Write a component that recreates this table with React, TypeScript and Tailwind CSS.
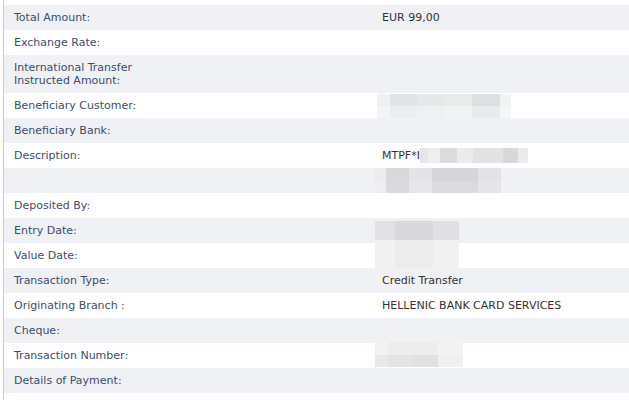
import React from "react";

type Cell = { w: string; c: string };

function Mosaic({ rows, className }: { rows: { h: string; cells: Cell[] }[]; className?: string }) {
  return (
    <span className={"flex flex-col " + (className ?? "")}>
      {rows.map((r, i) => (
        <span key={i} className={"flex " + r.h}>
          {r.cells.map((c, j) => (
            <span key={j} className={c.w + " " + c.c + " h-full"} />
          ))}
        </span>
      ))}
    </span>
  );
}

type Row = { label: React.ReactNode; value?: React.ReactNode };

const rows: Row[] = [
  { label: "Total Amount:", value: "EUR 99,00" },
  { label: "Exchange Rate:" },
  {
    label: (
      <>
        International Transfer
        <br />
        Instructed Amount:
      </>
    ),
  },
  {
    label: "Beneficiary Customer:",
    value: (
      <Mosaic
        className="absolute left-[5px] top-[1px]"
        rows={[
          {
            h: "h-[12px]",
            cells: [
              { w: "w-[13px]", c: "bg-[#eff0f1]" },
              { w: "w-[27px]", c: "bg-[#e1e3e4]" },
              { w: "w-[28px]", c: "bg-[#e5e7e8]" },
              { w: "w-[27px]", c: "bg-[#e9ebeb]" },
              { w: "w-[28px]", c: "bg-[#dde0e1]" },
              { w: "w-[11px]", c: "bg-[#f2f3f4]" },
            ],
          },
          {
            h: "h-[12px]",
            cells: [
              { w: "w-[13px]", c: "bg-[#f3f4f5]" },
              { w: "w-[27px]", c: "bg-[#ecedee]" },
              { w: "w-[28px]", c: "bg-[#eff0f1]" },
              { w: "w-[27px]", c: "bg-[#f1f2f2]" },
              { w: "w-[28px]", c: "bg-[#e8eaeb]" },
              { w: "w-[11px]", c: "bg-[#f5f6f6]" },
            ],
          },
        ]}
      />
    ),
  },
  { label: "Beneficiary Bank:" },
  {
    label: "Description:",
    value: (
      <span className="flex h-[13px] items-center">
        <span>MTPF*I</span>
        <Mosaic
          className="my-[-1px]"
          rows={[
            {
              h: "h-[15px]",
              cells: [
                { w: "w-[8px]", c: "bg-[#e6e6e8]" },
                { w: "w-[12px]", c: "bg-[#eeeef0]" },
                { w: "w-[17px]", c: "bg-[#dcdcdf]" },
                { w: "w-[16px]", c: "bg-[#ebebed]" },
                { w: "w-[30px]", c: "bg-[#e2e2e5]" },
                { w: "w-[15px]", c: "bg-[#d8d8db]" },
                { w: "w-[10px]", c: "bg-[#ebebed]" },
              ],
            },
          ]}
        />
      </span>
    ),
  },
  {
    label: "\u00a0",
    value: (
      <Mosaic
        className="absolute left-[3px] top-0"
        rows={[
          {
            h: "h-[13px]",
            cells: [
              { w: "w-[11px]", c: "bg-[#ececf0]" },
              { w: "w-[23px]", c: "bg-[#d8d8dd]" },
              { w: "w-[23px]", c: "bg-[#e4e4e8]" },
              { w: "w-[46px]", c: "bg-[#d5d5da]" },
              { w: "w-[23px]", c: "bg-[#e3e3e7]" },
            ],
          },
          {
            h: "h-[12px]",
            cells: [
              { w: "w-[11px]", c: "bg-[#eeeef1]" },
              { w: "w-[23px]", c: "bg-[#dadade]" },
              { w: "w-[23px]", c: "bg-[#e7e7eb]" },
              { w: "w-[46px]", c: "bg-[#dbdbdf]" },
              { w: "w-[23px]", c: "bg-[#e6e6ea]" },
            ],
          },
        ]}
      />
    ),
  },
  { label: "Deposited By:" },
  {
    label: "Entry Date:",
    value: (
      <Mosaic
        className="absolute left-[3px] top-[3px] z-10"
        rows={[
          {
            h: "h-[19px]",
            cells: [
              { w: "w-[20px]", c: "bg-[#e1e1e5]" },
              { w: "w-[38px]", c: "bg-[#d8d8dd]" },
              { w: "w-[26px]", c: "bg-[#e0e0e4]" },
            ],
          },
          {
            h: "h-[28px]",
            cells: [
              { w: "w-[20px]", c: "bg-[#f1f1f1]" },
              { w: "w-[38px]", c: "bg-[#ececec]" },
              { w: "w-[26px]", c: "bg-[#f1f1f1]" },
            ],
          },
        ]}
      />
    ),
  },
  { label: "Value Date:" },
  { label: "Transaction Type:", value: "Credit Transfer" },
  { label: "Originating Branch :", value: "HELLENIC BANK CARD SERVICES" },
  { label: "Cheque:" },
  {
    label: "Transaction Number:",
    value: (
      <Mosaic
        className="absolute left-[3px] top-[-1px]"
        rows={[
          {
            h: "h-[13px]",
            cells: [
              { w: "w-[13px]", c: "bg-[#f2f2f2]" },
              { w: "w-[50px]", c: "bg-[#ededed]" },
              { w: "w-[25px]", c: "bg-[#f3f3f3]" },
            ],
          },
          {
            h: "h-[12px]",
            cells: [
              { w: "w-[13px]", c: "bg-[#e9e9e9]" },
              { w: "w-[25px]", c: "bg-[#e4e4e4]" },
              { w: "w-[25px]", c: "bg-[#e1e1e1]" },
              { w: "w-[25px]", c: "bg-[#f0f0f0]" },
            ],
          },
        ]}
      />
    ),
  },
  { label: "Details of Payment:" },
  { label: "\u00a0" },
];

export default function App() {
  return (
    <div className="w-[629px] h-[400px] overflow-hidden bg-white pl-[3px] font-['DejaVu_Sans',sans-serif] text-[11px] leading-[13px]">
      <div className="h-full border-l border-[#c9c9c9] pt-[5px]">
        {rows.map((r, i) => (
          <div
            key={i}
            className={
              "grid grid-cols-[368px_1fr] " + (i % 2 === 0 ? "bg-[#f0f1f5]" : "bg-white")
            }
          >
            <div className="px-[10px] py-[6px] text-[#3b4d6b]">{r.label}</div>
            <div className="relative px-[10px] py-[6px] text-[#333333]">{r.value}</div>
          </div>
        ))}
      </div>
    </div>
  );
}
